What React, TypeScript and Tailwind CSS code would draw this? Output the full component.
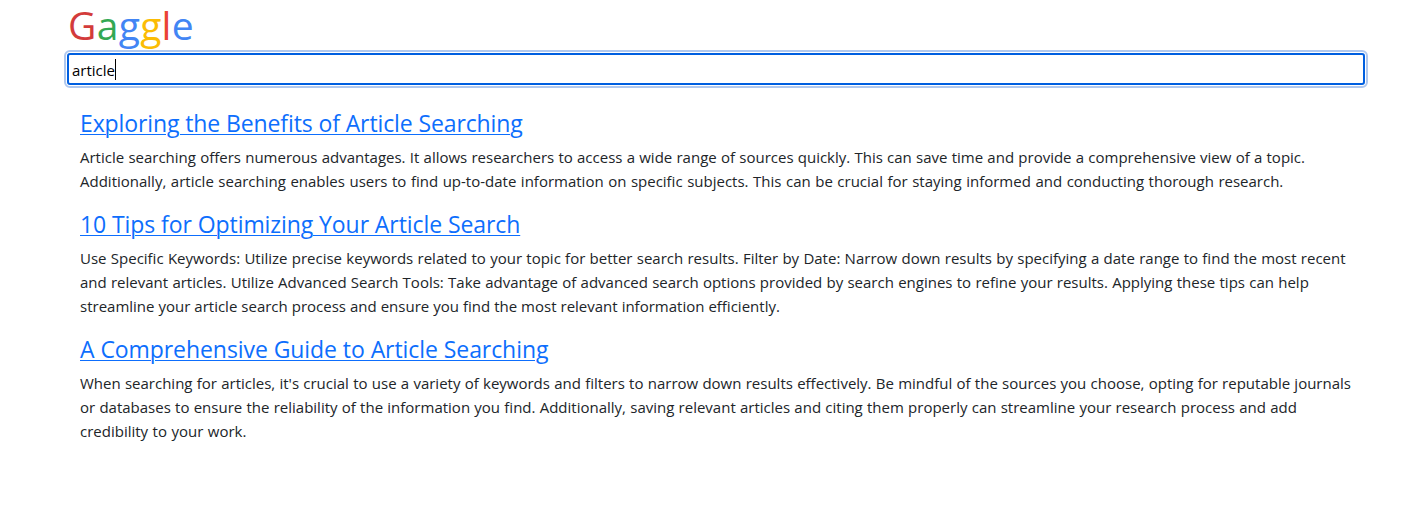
const results = [
  { title: "Exploring the Benefits of Article Searching", tracking: "tracking-[-0.11px]", lines: [
    { text: "Article searching offers numerous advantages. It allows researchers to access a wide range of sources quickly. This can save time and provide a comprehensive view of a topic.", spacing: "[word-spacing:0.34px]" },
    { text: "Additionally, article searching enables users to find up-to-date information on specific subjects. This can be crucial for staying informed and conducting thorough research.", spacing: "[word-spacing:0.63px]" }] },
  { title: "10 Tips for Optimizing Your Article Search", tracking: "tracking-[-0.08px]", lines: [
    { text: "Use Specific Keywords: Utilize precise keywords related to your topic for better search results. Filter by Date: Narrow down results by specifying a date range to find the most recent", spacing: "[word-spacing:0.4px]" },
    { text: "and relevant articles. Utilize Advanced Search Tools: Take advantage of advanced search options provided by search engines to refine your results. Applying these tips can help", spacing: "[word-spacing:0.37px]" },
    { text: "streamline your article search process and ensure you find the most relevant information efficiently.", spacing: "[word-spacing:0.1px]" }] },
  { title: "A Comprehensive Guide to Article Searching", tracking: "tracking-[-0.07px]", lines: [
    { text: "When searching for articles, it's crucial to use a variety of keywords and filters to narrow down results effectively. Be mindful of the sources you choose, opting for reputable journals", spacing: "[word-spacing:0.36px]" },
    { text: "or databases to ensure the reliability of the information you find. Additionally, saving relevant articles and citing them properly can streamline your research process and add", spacing: "[word-spacing:0.35px]" },
    { text: "credibility to your work.", spacing: "[word-spacing:0.6px]" }] },
];

export default function App() {
  return (
    <main className="h-[527px] bg-white px-[67px] font-['Open_Sans','Noto_Sans',sans-serif] text-[#212529]">
      <h1 className="h-[53px] whitespace-nowrap pl-px text-[39px] leading-[49px] tracking-[0.3px]">
        <span className="text-[#d33b3b]">G</span><span className="text-[#34a853]">a</span><span className="text-[#4285f4]">g</span><span className="text-[#fbbc05]">g</span><span className="text-[#ea4335]">l</span><span className="text-[#4285f4]">e</span>
      </h1>
      <div className="flex h-8 w-[1298px] items-center rounded-[3px] border-2 border-[#005fe0] px-[3px] text-[15px] text-black outline-2 outline-offset-1 outline-[#b0c8ee]">
        <span className="pt-0.5 leading-6">article</span><span className="mt-px h-[21px] w-px bg-black" />
      </div>
      <div className="px-[13px] pt-6">
        {results.map((r) => (
          <section key={r.title} className="mb-[17px]">
            <h2 className={`mb-[7px] h-[29px] whitespace-nowrap text-[23px] leading-[29px] text-[#0d6efd] underline decoration-1 underline-offset-2 ${r.tracking}`}>{r.title}</h2>
            {r.lines.map((line) => <p key={line.text} className={`whitespace-nowrap text-[15px] leading-6 ${line.spacing}`}>{line.text}</p>)}
          </section>
        ))}
      </div>
    </main>
  );
}
